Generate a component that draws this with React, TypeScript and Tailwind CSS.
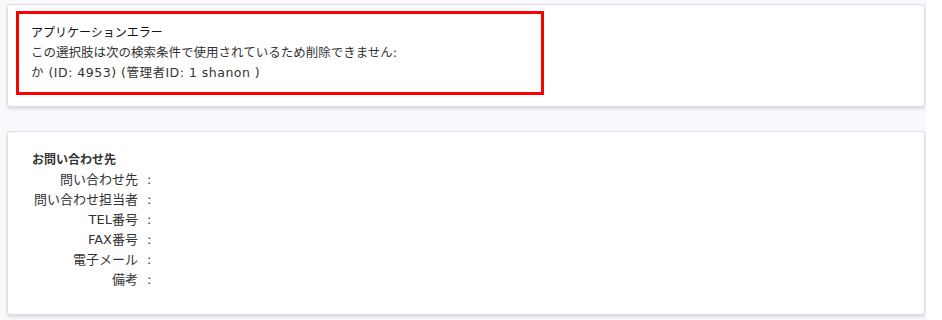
const rows: string[] = [
  "問い合わせ先",
  "問い合わせ担当者",
  "TEL番号",
  "FAX番号",
  "電子メール",
  "備考",
];

const font = {
  fontFamily: '"DejaVu Sans", "Noto Sans CJK JP", sans-serif',
};

export default function App() {
  return (
    <div
      className="flex h-[320px] w-[942px] bg-white text-[#333]"
      style={font}
    >
      <div className="flex w-[926px] flex-col bg-[#f8f9fc] pl-[7px] pr-px pt-[4px]">
        <div className="rounded-[3px] border border-[#dcdde2] bg-white px-[8px] pb-[11px] pt-[6px] shadow-[0_2px_3px_rgba(0,0,0,0.12)]">
          <div className="w-[528px] border-[3px] border-[#ff0000] px-[12px] py-[9px] leading-[20px]">
            <div className="text-[12px] text-[#111]">アプリケーションエラー</div>
            <div className="text-[12.5px]">
              この選択肢は次の検索条件で使用されているため削除できません:
            </div>
            <div className="text-[12.5px] tracking-[0.5px]">
              か (ID: 4953) (管理者ID: 1 shanon )
            </div>
          </div>
        </div>
        <div className="mt-[24px] rounded-[3px] border border-[#dcdde2] bg-white px-[24px] pb-[24px] pt-[18px] shadow-[0_2px_3px_rgba(0,0,0,0.12)]">
          <div className="text-[12px] font-bold leading-[20px]">お問い合わせ先</div>
          <div className="flex flex-col">
            {rows.map((r) => (
              <div key={r} className="flex text-[13px] leading-[20px]">
                <span className="w-[106px] whitespace-nowrap text-right">{r}</span>
                <span className="ml-[9px]">:</span>
              </div>
            ))}
          </div>
        </div>
      </div>
    </div>
  );
}
